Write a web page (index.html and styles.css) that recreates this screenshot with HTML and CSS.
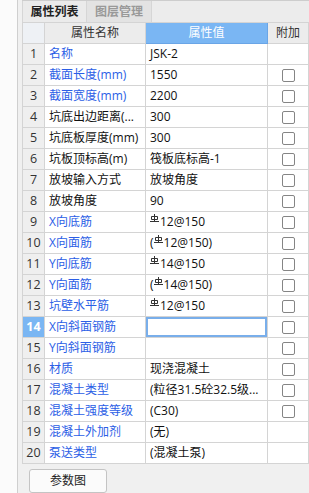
FILE: index.html
```html
<!DOCTYPE html>
<html lang="zh">
<head>
<meta charset="utf-8">
<link rel="stylesheet" href="styles.css">
</head>
<body>
<div class="app">
  <div class="side"></div>
  <div class="panel">
    <div class="tabs">
      <div class="tab active">属性列表</div>
      <div class="tab">图层管理</div>
      <div class="tab-fill"></div>
    </div>
    <div class="grid-wrap">
      <div class="row head">
        <div class="c num"></div>
        <div class="c name">属性名称</div>
        <div class="c val">属性值</div>
        <div class="c add">附加</div>
      </div>
      <div class="row"><div class="c num">1</div><div class="c name blue">名称</div><div class="c val">JSK-2</div><div class="c add"></div></div>
      <div class="row"><div class="c num">2</div><div class="c name blue">截面长度(mm)</div><div class="c val">1550</div><div class="c add"><span class="cb"></span></div></div>
      <div class="row"><div class="c num">3</div><div class="c name blue">截面宽度(mm)</div><div class="c val">2200</div><div class="c add"><span class="cb"></span></div></div>
      <div class="row"><div class="c num">4</div><div class="c name">坑底出边距离(...</div><div class="c val">300</div><div class="c add"><span class="cb"></span></div></div>
      <div class="row"><div class="c num">5</div><div class="c name">坑底板厚度(mm)</div><div class="c val">300</div><div class="c add"><span class="cb"></span></div></div>
      <div class="row"><div class="c num">6</div><div class="c name">坑板顶标高(m)</div><div class="c val">筏板底标高-1</div><div class="c add"><span class="cb"></span></div></div>
      <div class="row"><div class="c num">7</div><div class="c name">放坡输入方式</div><div class="c val">放坡角度</div><div class="c add"><span class="cb"></span></div></div>
      <div class="row"><div class="c num">8</div><div class="c name">放坡角度</div><div class="c val">90</div><div class="c add"><span class="cb"></span></div></div>
      <div class="row"><div class="c num">9</div><div class="c name blue">X向底筋</div><div class="c val"><svg class="bar" width="9" height="9" viewBox="0 0 9 9"><path d="M4.5 0v7M1.5 2.5h6v3h-6zM0 7.5h9"/></svg>12@150</div><div class="c add"><span class="cb"></span></div></div>
      <div class="row"><div class="c num">10</div><div class="c name blue">X向面筋</div><div class="c val">(<svg class="bar" width="9" height="9" viewBox="0 0 9 9"><path d="M4.5 0v7M1.5 2.5h6v3h-6zM0 7.5h9"/></svg>12@150)</div><div class="c add"><span class="cb"></span></div></div>
      <div class="row"><div class="c num">11</div><div class="c name blue">Y向底筋</div><div class="c val"><svg class="bar" width="9" height="9" viewBox="0 0 9 9"><path d="M4.5 0v7M1.5 2.5h6v3h-6zM0 7.5h9"/></svg>14@150</div><div class="c add"><span class="cb"></span></div></div>
      <div class="row"><div class="c num">12</div><div class="c name blue">Y向面筋</div><div class="c val">(<svg class="bar" width="9" height="9" viewBox="0 0 9 9"><path d="M4.5 0v7M1.5 2.5h6v3h-6zM0 7.5h9"/></svg>14@150)</div><div class="c add"><span class="cb"></span></div></div>
      <div class="row"><div class="c num">13</div><div class="c name blue">坑壁水平筋</div><div class="c val"><svg class="bar" width="9" height="9" viewBox="0 0 9 9"><path d="M4.5 0v7M1.5 2.5h6v3h-6zM0 7.5h9"/></svg>12@150</div><div class="c add"><span class="cb"></span></div></div>
      <div class="row sel"><div class="c num">14</div><div class="c name blue">X向斜面钢筋</div><div class="c val edit"></div><div class="c add"><span class="cb"></span></div></div>
      <div class="row"><div class="c num">15</div><div class="c name blue">Y向斜面钢筋</div><div class="c val"></div><div class="c add"><span class="cb"></span></div></div>
      <div class="row"><div class="c num">16</div><div class="c name blue">材质</div><div class="c val">现浇混凝土</div><div class="c add"><span class="cb"></span></div></div>
      <div class="row"><div class="c num">17</div><div class="c name blue">混凝土类型</div><div class="c val">(粒径31.5砼32.5级...</div><div class="c add"><span class="cb"></span></div></div>
      <div class="row"><div class="c num">18</div><div class="c name blue">混凝土强度等级</div><div class="c val">(C30)</div><div class="c add"><span class="cb"></span></div></div>
      <div class="row"><div class="c num">19</div><div class="c name blue">混凝土外加剂</div><div class="c val">(无)</div><div class="c add"></div></div>
      <div class="row"><div class="c num">20</div><div class="c name blue">泵送类型</div><div class="c val">(混凝土泵)</div><div class="c add"></div></div>
      <div class="row"><div class="c num">21</div><div class="c name">泵送高度(m)</div><div class="c val"></div><div class="c add"><span class="cb"></span></div></div>
    </div>
    <div class="footer">
      <button class="btn">参数图</button>
    </div>
  </div>
</div>
</body>
</html>
```
FILE: styles.css
```css
html, body {
  margin: 0;
  padding: 0;
}
body {
  width: 309px;
  height: 493px;
  overflow: hidden;
  background: #fbfbfb;
  font-family: "Open Sans", "Noto Sans CJK SC", sans-serif;
  font-size: 12px;
  color: #111;
}
.app {
  display: flex;
  height: 493px;
}
.side {
  width: 17px;
  background: #fbfbfb;
  border-right: 1px solid #cfcfcf;
}
.panel {
  flex: 1;
  display: flex;
  flex-direction: column;
  background: #f0f0f0;
  padding-left: 4px;
  min-width: 0;
}
.tabs {
  display: flex;
  height: 21px;
  border-top: 1px solid #cdcdcd;
  background: #ececec;
}
.tab {
  box-sizing: border-box;
  width: 64px;
  line-height: 21px;
  text-align: center;
  border-left: 1px solid #d6d6d6;
  color: #999;
  background: #e3e3e3;
  font-weight: bold;
}
.tab + .tab {
  width: 66px;
  border-right: 1px solid #d6d6d6;
}
.tab.active {
  background: #ebebeb;
  color: #222;
}
.tab-fill {
  flex: 1;
}
.grid-wrap {
  height: 449px;
  overflow: hidden;
  background: #fff;
  border-left: 1px solid #d4d4d4;
  border-top: 1px solid #d4d4d4;
  box-sizing: border-box;
}
.row {
  display: grid;
  grid-template-columns: 22px 101px 122px 41px;
  height: 21px;
}
.c {
  box-sizing: border-box;
  border-right: 1px solid #d4d4d4;
  border-bottom: 1px solid #d4d4d4;
  height: 21px;
  line-height: 20px;
  white-space: nowrap;
  overflow: hidden;
}
.num {
  background: #efefef;
  text-align: center;
  color: #333;
  font-size: 12.5px;
}
.name {
  padding-left: 4px;
}
.val {
  padding-left: 4px;
}
.blue {
  color: #2b5ee6;
}
.add {
  display: flex;
  align-items: center;
  justify-content: center;
  padding-left: 1px;
}
.cb {
  display: block;
  width: 11px;
  height: 11px;
  border: 1px solid #858585;
  border-radius: 2px;
  background: #fff;
}
.head .c {
  background: #ececec;
  color: #333;
  text-align: center;
  padding-left: 0;
}
.head .num {
  background: #eef1f5;
}
.head .val {
  background: #7ab6f3;
  color: #fff;
  border-right-color: #6aa5e6;
  border-bottom-color: #6aa5e6;
}
.head .add {
  display: block;
}
.sel .num {
  background: #7ab6f3;
  color: #fff;
  font-weight: bold;
}
.edit {
  box-shadow: inset 0 0 0 2px #79aeea;
}
.bar {
  vertical-align: 3px;
  margin-right: 1px;
}
.bar path {
  fill: none;
  stroke: #333;
  stroke-width: 1;
}
.footer {
  flex: 1;
  padding: 5px 0 0 7px;
  background: #f0f0f0;
}
.btn {
  width: 78px;
  height: 24px;
  border: 1px solid #c4c4c4;
  border-radius: 3px;
  background: #fbfbfb;
  font-family: "Open Sans", "Noto Sans CJK SC", sans-serif;
  font-size: 12px;
  color: #222;
  padding: 0;
  line-height: 20px;
}
```
